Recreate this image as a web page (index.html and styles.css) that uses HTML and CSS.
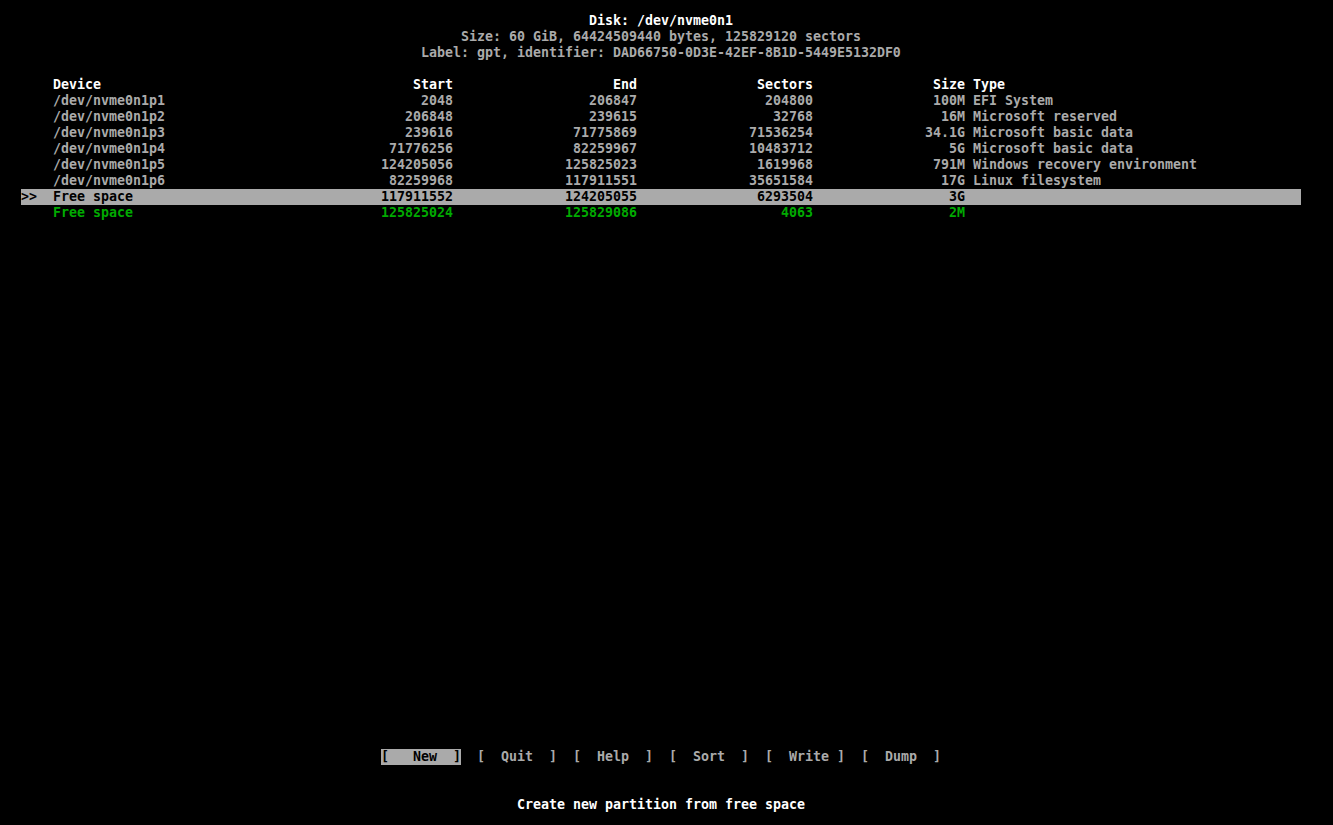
FILE: index.html
```html
<!DOCTYPE html>
<html lang="en">
<head>
<meta charset="utf-8">
<title>cfdisk</title>
<link rel="stylesheet" href="styles.css">
</head>
<body>
<div class="screen">
  <div class="info">
    <div class="line bright">Disk: /dev/nvme0n1</div>
    <div class="line">Size: 60 GiB, 64424509440 bytes, 125829120 sectors</div>
    <div class="line">Label: gpt, identifier: DAD66750-0D3E-42EF-8B1D-5449E5132DF0</div>
  </div>
  <div class="blank"></div>
  <div class="table">
    <div class="row head">
      <span class="ptr"></span><span class="dev">Device</span><span class="num start">Start</span><span class="num end">End</span><span class="num sec">Sectors</span><span class="num size">Size</span><span class="gap"></span><span class="type">Type</span>
    </div>
    <div class="row">
      <span class="ptr"></span><span class="dev">/dev/nvme0n1p1</span><span class="num start">2048</span><span class="num end">206847</span><span class="num sec">204800</span><span class="num size">100M</span><span class="gap"></span><span class="type">EFI System</span>
    </div>
    <div class="row">
      <span class="ptr"></span><span class="dev">/dev/nvme0n1p2</span><span class="num start">206848</span><span class="num end">239615</span><span class="num sec">32768</span><span class="num size">16M</span><span class="gap"></span><span class="type">Microsoft reserved</span>
    </div>
    <div class="row">
      <span class="ptr"></span><span class="dev">/dev/nvme0n1p3</span><span class="num start">239616</span><span class="num end">71775869</span><span class="num sec">71536254</span><span class="num size">34.1G</span><span class="gap"></span><span class="type">Microsoft basic data</span>
    </div>
    <div class="row">
      <span class="ptr"></span><span class="dev">/dev/nvme0n1p4</span><span class="num start">71776256</span><span class="num end">82259967</span><span class="num sec">10483712</span><span class="num size">5G</span><span class="gap"></span><span class="type">Microsoft basic data</span>
    </div>
    <div class="row">
      <span class="ptr"></span><span class="dev">/dev/nvme0n1p5</span><span class="num start">124205056</span><span class="num end">125825023</span><span class="num sec">1619968</span><span class="num size">791M</span><span class="gap"></span><span class="type">Windows recovery environment</span>
    </div>
    <div class="row">
      <span class="ptr"></span><span class="dev">/dev/nvme0n1p6</span><span class="num start">82259968</span><span class="num end">117911551</span><span class="num sec">35651584</span><span class="num size">17G</span><span class="gap"></span><span class="type">Linux filesystem</span>
    </div>
    <div class="row selected">
      <span class="ptr">&gt;&gt;</span><span class="dev">Free space</span><span class="num start">117911552</span><span class="num end">124205055</span><span class="num sec">6293504</span><span class="num size">3G</span><span class="gap"></span><span class="type"></span>
    </div>
    <div class="row free">
      <span class="ptr"></span><span class="dev">Free space</span><span class="num start">125825024</span><span class="num end">125829086</span><span class="num sec">4063</span><span class="num size">2M</span><span class="gap"></span><span class="type"></span>
    </div>
  </div>
  <div class="spacer"></div>
  <div class="menu">
    <span class="btn active">[   New  ]</span>
    <span class="btn">[  Quit  ]</span>
    <span class="btn">[  Help  ]</span>
    <span class="btn">[  Sort  ]</span>
    <span class="btn">[  Write ]</span>
    <span class="btn">[  Dump  ]</span>
  </div>
  <div class="status">Create new partition from free space</div>
</div>
</body>
</html>
```

FILE: styles.css
```css
html, body {
  margin: 0;
  padding: 0;
  background: #000;
}

body {
  width: 1333px;
  height: 825px;
  overflow: hidden;
  font-family: "DejaVu Sans Mono", "Liberation Mono", monospace;
  font-size: 13.29px;
  font-weight: bold;
  line-height: 16px;
  color: #aaaaaa;
}

.screen {
  box-sizing: content-box;
  width: 1312px;
  height: 800px;
  padding-top: 13px;
  padding-left: 5px;
  display: flex;
  flex-direction: column;
}

.info {
  display: flex;
  flex-direction: column;
}

.line {
  height: 16px;
  text-align: center;
  white-space: pre;
}

.bright {
  color: #ffffff;
}

.blank {
  height: 16px;
}

.table {
  display: flex;
  flex-direction: column;
  margin-left: 16px;
  width: 1280px;
}

.row {
  display: grid;
  grid-template-columns: 32px 304px 96px 184px 176px 152px 8px 328px;
  height: 16px;
  white-space: pre;
}

.num {
  text-align: right;
}

.head {
  color: #ffffff;
}

.selected {
  background: #aaaaaa;
  color: #000000;
}

.free {
  color: #00aa00;
}

.spacer {
  flex: 1;
}

.menu {
  display: flex;
  justify-content: center;
  gap: 16px;
  height: 16px;
}

.btn {
  width: 80px;
  white-space: pre;
  color: #aaaaaa;
}

.btn.active {
  background: #aaaaaa;
  color: #000000;
}

.status {
  margin-top: 32px;
  height: 16px;
  text-align: center;
  color: #ffffff;
  white-space: pre;
}
```
